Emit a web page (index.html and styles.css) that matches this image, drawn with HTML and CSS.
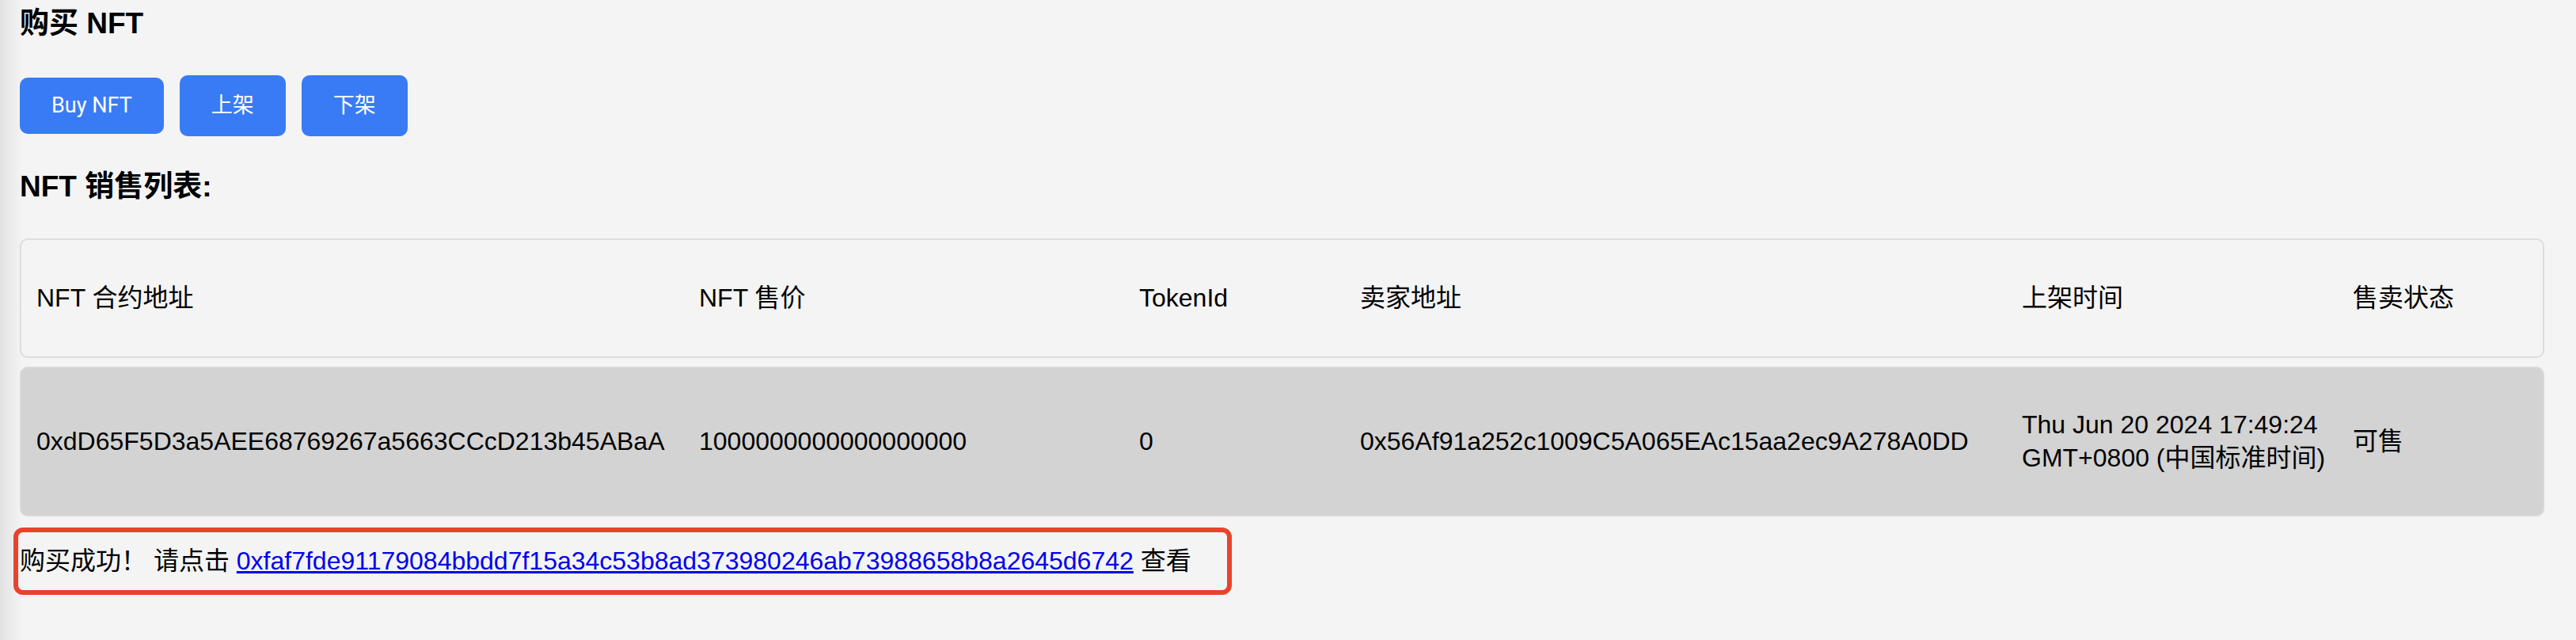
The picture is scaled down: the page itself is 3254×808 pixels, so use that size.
FILE: index.html
```html
<!DOCTYPE html>
<html lang="zh-CN">
<head>
<meta charset="utf-8">
<title>购买 NFT</title>
<link rel="stylesheet" href="styles.css">
</head>
<body>
<main class="page">
  <h3 class="title">购买 NFT</h3>
  <div class="actions">
    <button class="btn">Buy NFT</button>
    <button class="btn btn-cjk">上架</button>
    <button class="btn btn-cjk">下架</button>
  </div>
  <h3 class="title title-list">NFT 销售列表:</h3>
  <div class="table">
    <div class="row row-head">
      <div class="cell">NFT 合约地址</div>
      <div class="cell">NFT 售价</div>
      <div class="cell">TokenId</div>
      <div class="cell">卖家地址</div>
      <div class="cell">上架时间</div>
      <div class="cell">售卖状态</div>
    </div>
    <div class="row row-item">
      <div class="cell">0xdD65F5D3a5AEE68769267a5663CCcD213b45ABaA</div>
      <div class="cell">1000000000000000000</div>
      <div class="cell">0</div>
      <div class="cell">0x56Af91a252c1009C5A065EAc15aa2ec9A278A0DD</div>
      <div class="cell">Thu Jun 20 2024 17:49:24 GMT+0800 (中国标准时间)</div>
      <div class="cell">可售</div>
    </div>
  </div>
  <p class="result">购买成功！ 请点击 <a class="tx-link" href="#">0xfaf7fde91179084bbdd7f15a34c53b8ad373980246ab73988658b8a2645d6742</a> 查看</p>
</main>
</body>
</html>
```
FILE: styles.css
```css
html {
  background: linear-gradient(90deg, #e2e2e2 0px, #f4f4f4 28px) #f4f4f4;
  min-height: 100%;
}
body {
  margin: 0;
  font-family: "Liberation Sans", Arial, "Noto Sans CJK SC", sans-serif;
  font-size: 32px;
  color: #000;
}
.page {
  padding: 0 0 0 25px;
}
.title {
  margin: 8px 0 0;
  font-size: 37px;
  line-height: 44px;
  font-weight: 700;
}
.title-list {
  margin-top: 42px;
}
.actions {
  display: flex;
  align-items: center;
  gap: 20px;
  margin-top: 43px;
}
.btn {
  font-family: Roboto, "Noto Sans CJK SC", sans-serif;
  font-size: 27px;
  line-height: 31px;
  color: #fff;
  background: #397bf5;
  border: 0;
  border-radius: 10px;
  padding: 20px 40px;
}
.btn-cjk {
  line-height: 37px;
}
.table {
  display: flex;
  flex-direction: column;
  gap: 11px;
  margin-top: 43px;
  width: 3189px;
}
.row {
  display: grid;
  grid-template-columns: 837px 556px 279px 836px 418px 1fr;
  align-items: center;
  border: 2px solid #dddddd;
  border-radius: 10px;
  line-height: 42px;
}
.row-head {
  padding: 52px 0 53px;
  background: #f4f4f4;
}
.row-item {
  padding: 50px 0 51px;
  background: #d3d3d3;
  border-color: #d9d9d9;
}
.cell {
  padding-left: 19px;
}
.result {
  box-sizing: border-box;
  width: 1539px;
  margin: 14px 0 0 -8px;
  padding: 14px 0 15px 2px;
  border: 6px solid #e8432b;
  border-radius: 12px;
  line-height: 44px;
}
.tx-link {
  color: #0000ee;
}
```
